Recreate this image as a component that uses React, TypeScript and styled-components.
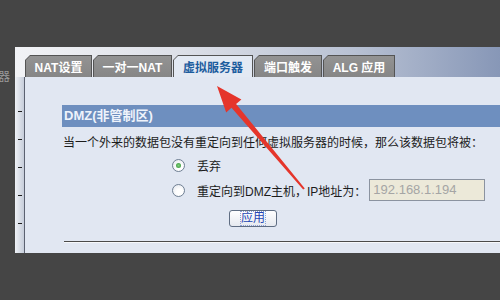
import React from "react";
import styled, { createGlobalStyle } from "styled-components";

const tabs = [
  { label: "NAT设置", w: 67 },
  { label: "一对一NAT", w: 79 },
  { label: "虚拟服务器", w: 80, active: true },
  { label: "端口触发", w: 68 },
  { label: "ALG 应用", w: 72 },
];

const App = () => {
  return (
    <Stage>
      <GlobalStyle />
      <Row>
        <Gutter>
          <GutterText>器</GutterText>
        </Gutter>
        <Panel>
          <TabBand>
            {tabs.map((t) => (
              <Tab key={t.label} $w={t.w} $active={!!t.active}>
                <TabFace $active={!!t.active}>{t.label}</TabFace>
              </Tab>
            ))}
          </TabBand>
          <Body>
            <SideStrip>
              {[0, 1, 2, 3, 4].map((i) => (
                <Dash key={i} />
              ))}
            </SideStrip>
            <Content>
              <SectionBar>DMZ(非管制区)</SectionBar>
              <Desc>
                当一个外来的数据包没有重定向到任何虚拟服务器的时候，那么该数据包将被：
              </Desc>
              <Options>
                <OptionRow $h={20} $top={2}>
                  <Radio $checked />
                  <span>丢弃</span>
                </OptionRow>
                <OptionRow $h={22} $top={4}>
                  <Radio />
                  <span>重定向到DMZ主机，IP地址为：</span>
                  <IpInput>192.168.1.194</IpInput>
                </OptionRow>
              </Options>
              <ButtonRow>
                <ApplyButton>
                  <ButtonLabel>应用</ButtonLabel>
                </ApplyButton>
              </ButtonRow>
              <Rule />
            </Content>
          </Body>
        </Panel>
      </Row>
      <Arrow width="500" height="300" viewBox="0 0 500 300">
        <polygon
          points="217,86 241.4,99.4 236.1,104 304.8,188.4 303.2,189.6 231.5,107.8 226.2,112.4"
          fill="#e5352b"
        />
      </Arrow>
    </Stage>
  );
};

export default App;

const GlobalStyle = createGlobalStyle`
  html, body {
    margin: 0;
    padding: 0;
    background: #454545;
  }
  body {
    width: 500px;
    height: 300px;
    overflow: hidden;
    font-family: "Liberation Sans", "Noto Sans CJK SC", sans-serif;
  }
`;

const Stage = styled.div`
  position: relative;
  width: 500px;
  height: 300px;
  box-sizing: border-box;
  padding-top: 47px;
  display: flex;
  flex-direction: column;
`;

const Row = styled.div`
  display: flex;
  height: 206px;
`;

const Gutter = styled.div`
  width: 15px;
  overflow: hidden;
  display: flex;
  justify-content: flex-end;
  align-items: flex-start;
  padding-top: 20px;
`;

const GutterText = styled.span`
  flex-shrink: 0;
  margin-right: 5px;
  font-size: 12px;
  color: #9a9a9a;
  font-family: "Noto Sans CJK SC", sans-serif;
`;

const Panel = styled.div`
  flex: 1;
  display: flex;
  flex-direction: column;
`;

const TabBand = styled.div`
  height: 30px;
  display: flex;
  align-items: flex-end;
  gap: 1px;
  padding-left: 10px;
  background: linear-gradient(to right, #f2f3f6 0%, #dcdfe7 35%, #b8c1d3 70%, #8797b7 100%);
`;

const Tab = styled.div<{ $w: number; $active: boolean }>`
  width: ${({ $w }) => $w}px;
  height: 22px;
  box-sizing: border-box;
  padding: 1px 1px 0 1px;
  display: flex;
  background: #545454;
  clip-path: polygon(5px 0, 100% 0, 100% 100%, 0 100%, 0 5px);
`;

const TabFace = styled.div<{ $active: boolean }>`
  flex: 1;
  display: flex;
  align-items: center;
  justify-content: center;
  padding-bottom: 1px;
  font-size: 12px;
  font-weight: bold;
  color: ${({ $active }) => ($active ? "#1c5c9e" : "#ffffff")};
  background: ${({ $active }) =>
    $active ? "#e3e9f3" : "linear-gradient(#939393, #868686)"};
  clip-path: polygon(4px 0, 100% 0, 100% 100%, 0 100%, 0 4px);
`;

const Body = styled.div`
  flex: 1;
  display: flex;
`;

const SideStrip = styled.div`
  width: 9px;
  border-right: 1px solid #5b6170;
  background: linear-gradient(to right, #eef1f6, #c6cdda);
  display: flex;
  flex-direction: column;
  gap: 27px;
  padding-top: 34px;
  box-sizing: content-box;
`;

const Dash = styled.div`
  width: 4px;
  height: 1px;
  margin-left: 3px;
  background: #1e1e1e;
`;

const Content = styled.div`
  flex: 1;
  background: #e1e7f2;
  padding: 28px 0 0 37px;
  display: flex;
  flex-direction: column;
`;

const SectionBar = styled.div`
  height: 22px;
  line-height: 22px;
  padding-left: 2px;
  background: #6e8fbf;
  color: #eef3fb;
  font-size: 13px;
  font-weight: bold;
`;

const Desc = styled.div`
  margin-top: 6px;
  padding-left: 1px;
  line-height: 20px;
  font-size: 12px;
  color: #1c1c1c;
  white-space: nowrap;
`;

const Options = styled.div`
  padding-left: 110px;
  display: flex;
  flex-direction: column;
`;

const OptionRow = styled.div<{ $h: number; $top: number }>`
  height: ${({ $h }) => $h}px;
  margin-top: ${({ $top }) => $top}px;
  display: flex;
  align-items: center;
  gap: 12px;
  font-size: 12px;
  color: #1c1c1c;
  white-space: nowrap;
`;

const Radio = styled.span<{ $checked?: boolean }>`
  position: relative;
  width: 13px;
  height: 13px;
  box-sizing: border-box;
  border-radius: 50%;
  border: 1px solid #6f7f93;
  background: radial-gradient(circle at 60% 65%, #ffffff 30%, #dfe3ea 100%);
  display: flex;
  align-items: center;
  justify-content: center;
  &::after {
    content: "";
    display: ${({ $checked }) => ($checked ? "block" : "none")};
    width: 5px;
    height: 5px;
    border-radius: 50%;
    background: radial-gradient(circle, #7fd07a 0%, #2f8f35 100%);
  }
`;

const IpInput = styled.div`
  margin-left: -9px;
  width: 116px;
  height: 22px;
  box-sizing: border-box;
  border: 1px solid #8b93a0;
  background: #ece9d9;
  color: #a5a5a5;
  font-size: 13px;
  line-height: 20px;
  padding-left: 3px;
`;

const ButtonRow = styled.div`
  margin-top: 9px;
  padding-left: 167px;
  display: flex;
`;

const ApplyButton = styled.div`
  width: 48px;
  height: 17px;
  box-sizing: border-box;
  border: 1px solid #5f6d82;
  border-radius: 3px;
  background: linear-gradient(#ffffff, #e6e9ef);
  display: flex;
  align-items: center;
  justify-content: center;
`;

const ButtonLabel = styled.span`
  font-size: 12px;
  line-height: 13px;
  color: #2445b5;
  outline: 1px dotted #8ea0d4;
`;

const Rule = styled.div`
  margin-top: 14px;
  margin-left: 2px;
  border-top: 1px solid #4a4a4a;
  border-bottom: 1px solid #f6f8fb;
`;

const Arrow = styled.svg`
  position: absolute;
  top: 0;
  left: 0;
  pointer-events: none;
`;
